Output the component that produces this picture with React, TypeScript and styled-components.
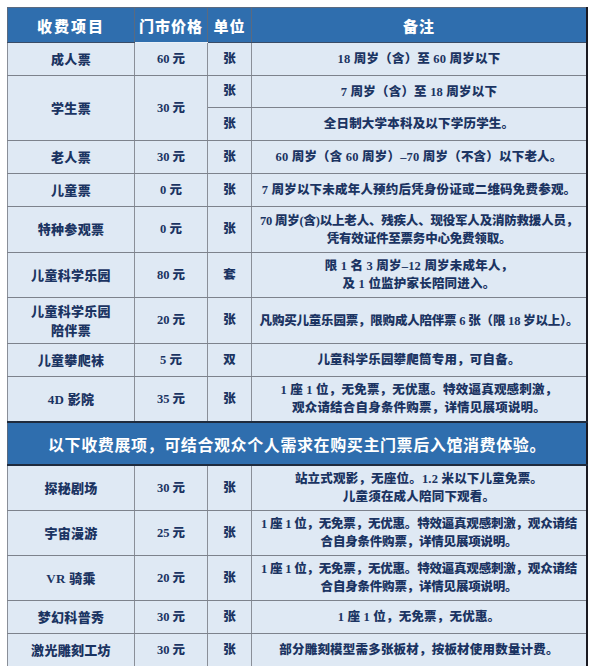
import React from "react";
import styled, { createGlobalStyle } from "styled-components";

const Global = createGlobalStyle`
  html, body { margin: 0; padding: 0; background: #ffffff; }
  body { font-family: "Liberation Serif", "Noto Sans CJK SC", serif; }
`;

const Page = styled.div`
  padding: 7px 0 0 7px;
`;

const Table = styled.table`
  width: 581px;
  border-collapse: collapse;
  table-layout: fixed;
  border-right: 2px solid #1a1a22;
`;

const HeadCell = styled.th<{ $w?: number; $spacing?: number }>`
  width: ${(p) => (p.$w ? `${p.$w}px` : "auto")};
  height: 34px;
  padding: 0;
  background: #2f6eae;
  color: #ffffff;
  font-family: "Noto Sans CJK SC", sans-serif;
  font-weight: 900;
  font-size: 15px;
  letter-spacing: ${(p) => p.$spacing ?? 1}px;
  text-align: center;
  border: 1px solid #5a6a80;
  border-bottom: 1px solid ${(p) => (p.$w === 72 ? "#e8f0f8" : "#3a4c66")};
`;

const Cell = styled.td<{ $h?: number; $dark?: boolean }>`
  height: ${(p) => p.$h ?? 32}px;
  padding: 0;
  background: #dfe9f4;
  color: #1b3462;
  font-family: "Liberation Serif", "Noto Sans CJK SC", serif;
  font-weight: 800;
  font-size: 12.5px;
  line-height: 19px;
  text-align: center;
  vertical-align: middle;
  white-space: nowrap;
  border-left: 1px solid #8a8f98;
  border-right: 1px solid #8a8f98;
  border-top: 1px solid ${(p) => (p.$dark ? "#2a2f3a" : "#7d828c")};
  border-bottom: 1px solid #7d828c;
`;

const NameCell = styled(Cell)`
  font-size: 13px;
  letter-spacing: 0.3px;
`;

const NoteCell = styled(Cell)<{ $tight?: boolean }>`
  letter-spacing: ${(p) => (p.$tight ? "-0.2px" : "0.2px")};
  line-height: 18px;
`;

const Banner = styled.td`
  height: 41px;
  padding: 0;
  background: #2f6eae;
  color: #ffffff;
  font-family: "Noto Sans CJK SC", sans-serif;
  font-weight: 700;
  font-size: 16px;
  letter-spacing: 0.6px;
  text-align: center;
  border-top: 2px solid #1f2b3d;
  border-bottom: 2px solid #1f2b3d;
  border-left: 1px solid #5a6a80;
`;

type Row = {
  name: React.ReactNode;
  price: string;
  unit: string;
  note: React.ReactNode;
  h: number;
  dark?: boolean;
  tight?: boolean;
};

const top: Row[] = [
  { name: "儿童票", price: "0 元", unit: "张", note: "7 周岁以下未成年人预约后凭身份证或二维码免费参观。", h: 32 },
  {
    name: "特种参观票",
    price: "0 元",
    unit: "张",
    note: (
      <>
        70 周岁(含)以上老人、残疾人、现役军人及消防救援人员，
        <br />
        凭有效证件至票务中心免费领取。
      </>
    ),
    h: 45,
    dark: true,
    tight: true,
  },
  {
    name: "儿童科学乐园",
    price: "80 元",
    unit: "套",
    note: (
      <>
        限 1 名 3 周岁–12 周岁未成年人，
        <br />
        及 1 位监护家长陪同进入。
      </>
    ),
    h: 44,
    dark: true,
  },
  {
    name: (
      <>
        儿童科学乐园
        <br />
        陪伴票
      </>
    ),
    price: "20 元",
    unit: "张",
    note: "凡购买儿童乐园票，限购成人陪伴票 6 张（限 18 岁以上）。",
    h: 45,
    tight: true,
  },
  { name: "儿童攀爬袜", price: "5 元", unit: "双", note: "儿童科学乐园攀爬筒专用，可自备。", h: 32 },
  {
    name: "4D 影院",
    price: "35 元",
    unit: "张",
    note: (
      <>
        1 座 1 位，无免票，无优惠。特效逼真观感刺激，
        <br />
        观众请结合自身条件购票，详情见展项说明。
      </>
    ),
    h: 44,
    dark: true,
  },
];

const bottom: Row[] = [
  {
    name: "探秘剧场",
    price: "30 元",
    unit: "张",
    note: (
      <>
        站立式观影，无座位。1.2 米以下儿童免票。
        <br />
        儿童须在成人陪同下观看。
      </>
    ),
    h: 44,
  },
  {
    name: "宇宙漫游",
    price: "25 元",
    unit: "张",
    note: (
      <>
        1 座 1 位，无免票，无优惠。特效逼真观感刺激，观众请结
        <br />
        合自身条件购票，详情见展项说明。
      </>
    ),
    h: 44,
    dark: true,
    tight: true,
  },
  {
    name: "VR 骑乘",
    price: "20 元",
    unit: "张",
    note: (
      <>
        1 座 1 位，无免票，无优惠。特效逼真观感刺激，观众请结
        <br />
        合自身条件购票，详情见展项说明。
      </>
    ),
    h: 44,
    tight: true,
  },
  { name: "梦幻科普秀", price: "30 元", unit: "张", note: "1 座 1 位，无免票，无优惠。", h: 32 },
  {
    name: "激光雕刻工坊",
    price: "30 元",
    unit: "张",
    note: "部分雕刻模型需多张板材，按板材使用数量计费。",
    h: 32,
    dark: true,
  },
];

const renderRow = (r: Row, i: number) => (
  <tr key={i}>
    <NameCell $h={r.h} $dark={r.dark}>{r.name}</NameCell>
    <Cell $h={r.h} $dark={r.dark}>{r.price}</Cell>
    <Cell $h={r.h} $dark={r.dark}>{r.unit}</Cell>
    <NoteCell $h={r.h} $dark={r.dark} $tight={r.tight}>
      {r.note}
    </NoteCell>
  </tr>
);

export default function App() {
  return (
    <>
      <Global />
      <Page>
        <Table>
          <thead>
            <tr>
              <HeadCell $w={126} $spacing={2}>收费项目</HeadCell>
              <HeadCell $w={72}>门市价格</HeadCell>
              <HeadCell $w={43}>单位</HeadCell>
              <HeadCell>备注</HeadCell>
            </tr>
          </thead>
          <tbody>
            <tr>
              <NameCell>成人票</NameCell>
              <Cell>60 元</Cell>
              <Cell>张</Cell>
              <NoteCell>18 周岁（含）至 60 周岁以下</NoteCell>
            </tr>
            <tr>
              <NameCell rowSpan={2}>学生票</NameCell>
              <Cell rowSpan={2}>30 元</Cell>
              <Cell $h={31}>张</Cell>
              <NoteCell $h={31}>7 周岁（含）至 18 周岁以下</NoteCell>
            </tr>
            <tr>
              <Cell $dark>张</Cell>
              <NoteCell $dark>全日制大学本科及以下学历学生。</NoteCell>
            </tr>
            <tr>
              <NameCell $dark>老人票</NameCell>
              <Cell $dark>30 元</Cell>
              <Cell $dark>张</Cell>
              <NoteCell $dark>60 周岁（含 60 周岁）–70 周岁（不含）以下老人。</NoteCell>
            </tr>
            {top.map(renderRow)}
            <tr>
              <Banner colSpan={4}>以下收费展项，可结合观众个人需求在购买主门票后入馆消费体验。</Banner>
            </tr>
            {bottom.map(renderRow)}
          </tbody>
        </Table>
      </Page>
    </>
  );
}
